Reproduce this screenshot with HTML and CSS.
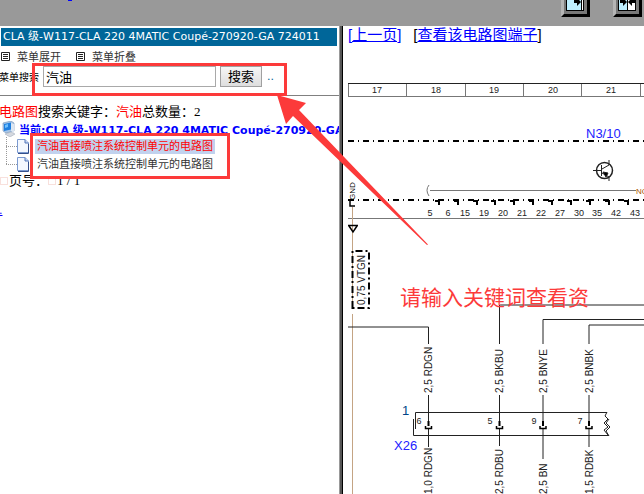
FILE: index.html
```
<!DOCTYPE html>
<html lang="zh-CN">
  <head>
    <meta charset="UTF-8" />
    <title>电路图</title>
    <meta name="viewport" content="width=device-width, initial-scale=1.0" />
    <link rel="stylesheet" href="styles.css">
  </head>
  <body>
    <header class="toolbar">
      <span class="toolbar-mark"></span>
      <div class="toolbar-buttons">
        <button type="button" class="frame-button" aria-label="单栏">
          <svg width="29" height="17" viewBox="0 0 29 17">
            <path d="M0 0H29V17H0z" fill="#000" />
            <path d="M0 0H4V13L0 17z" fill="#b5b5b5" />
            <path d="M3 0H26V14H3z" fill="#777" />
            <path d="M5 0H23V11H5z" fill="#000" />
            <path d="M6 0H20V10H6z" fill="#bfefff" />
            <path d="M21 0H22V10H21z" fill="#fff" />
            <path d="M13 0H18L20 2L16 6V3H13z" fill="#000" />
          </svg>
        </button>
        <button type="button" class="frame-button" aria-label="双栏">
          <svg width="29" height="17" viewBox="0 0 29 17">
            <path d="M0 0H29V17H0z" fill="#000" />
            <path d="M0 0H4V13L0 17z" fill="#b5b5b5" />
            <path d="M3 0H26V14H3z" fill="#777" />
            <path d="M5 0H23V11H5z" fill="#000" />
            <path d="M6 0H14V10H6z" fill="#bfefff" />
            <path d="M15 0H22V10H15z" fill="#fff" />
            <path d="M7 0H12L14 2L10 6V3H7zM22 0H17L15 2L19 6V3H22z" fill="#000" />
          </svg>
        </button>
      </div>
    </header>

    <main class="frames">
      <section class="menu">
        <div class="menu-title">CLA 级-W117-CLA 220 4MATIC Coupé-270920-GA 724011</div>

        <div class="menu-actions">
          <button type="button" class="menu-action">
            <svg width="9" height="9" viewBox="0 0 9 9"><path d="M.5.5h8v8h-8zM2 2.5h5M2 4.5h5M2 6.5h5" /></svg>
            菜单展开
          </button>
          <button type="button" class="menu-action">
            <svg width="9" height="9" viewBox="0 0 9 9"><path d="M.5.5h8v8h-8zM2 2.5h5M2 4.5h5M2 6.5h5" /></svg>
            菜单折叠
          </button>
        </div>

        <form class="search">
          <label for="keyword">菜单搜索</label>
          <input type="text" id="keyword" value="汽油" />
          <button type="button">搜索</button>
          <a href="#" class="search-more">..</a>
          <span class="mark mark-search"></span>
        </form>

        <p class="summary"><em>电路图</em>搜索关键字：<em>汽油</em>总数量：2</p>

        <div class="tree">
          <div class="tree-root">
            <svg width="14" height="16" viewBox="0 0 14 16">
              <path d="M1 2L9 0L12 2V10L4 12L1 10z" fill="#a9c7e8" stroke="#6f8fb5" stroke-width="0.6" />
              <path d="M2 3L9 1.500V8.500L2 10z" fill="#1f7fe0" />
              <path d="M3 4L6 3V6L3 7z" fill="#6fc0ff" />
              <path d="M9 2L12 3V12L9 10z" fill="#dce6f2" />
              <path d="M3 13L9 11L13 13L8 16z" fill="#d5d9e0" stroke="#98a2b3" stroke-width="0.5" />
            </svg>
            <a href="#">当前:CLA 级-W117-CLA 220 4MATIC Coupé-270920-GA 724011</a>
          </div>
          <ul class="tree-items">
            <li>
              <svg width="12" height="15" viewBox="0 0 12 15">
                <path d="M.5 .5H8L11.500 4V13.500H.5z" fill="#f4f8ff" stroke="#7c9ad0" />
                <path d="M8 .5V4H11.500" fill="#c5d7f5" stroke="#5577b8" />
                <path d="M1 14.500H11.500V5" fill="none" stroke="#34508c" />
              </svg>
              <a href="#" class="selected">汽油直接喷注系统控制单元的电路图</a>
            </li>
            <li>
              <svg width="12" height="15" viewBox="0 0 12 15">
                <path d="M.5 .5H8L11.500 4V13.500H.5z" fill="#f4f8ff" stroke="#7c9ad0" />
                <path d="M8 .5V4H11.500" fill="#c5d7f5" stroke="#5577b8" />
                <path d="M1 14.500H11.500V5" fill="none" stroke="#34508c" />
              </svg>
              <a href="#">汽油直接喷注系统控制单元的电路图</a>
            </li>
          </ul>
          <span class="mark mark-items"></span>
        </div>

        <p class="pager"><i></i>页号：<i></i>1 / 1</p>
        <a href="#" class="menu-end">.</a>
      </section>

      <div class="divider"></div>

      <section class="diagram">
        <nav class="diagram-links">
          <a href="#">[上一页]</a>
          <span>[<a href="#">查看该电路图端子</a>]</span>
        </nav>

        <svg class="wiring" width="296" height="444" viewBox="348 50 296 444">
          <!-- column ruler -->
          <path class="ruler" d="M348.500 84V96M406.500 84V96M465.500 84V96M523.500 84V96M581.500 84V96M640.500 84V96M348 96.500H644" />
          <path class="line" d="M348 83.500H644" />
          <g class="small">
            <text x="377" y="93">17</text>
            <text x="436" y="93">18</text>
            <text x="494" y="93">19</text>
            <text x="553" y="93">20</text>
            <text x="611" y="93">21</text>
          </g>

          <!-- control unit N3/10 -->
          <path class="dash" d="M348 141H644M348 200H644" />
          <text class="name" x="586" y="138">N3/10</text>
          <g class="thin">
            <circle cx="604.500" cy="170.500" r="8" stroke-width="1.500" />
            <path d="M593 170.500H601M601.500 165V176M602 169L609 165V160M602 173L609 177V181" />
            <path d="M603 172L608 173L606 177z" class="solid" />
          </g>
          <path class="grey" d="M430 190.500H636M429 185Q425 190 429 196" />
          <text class="label-orange" x="636" y="194">NC</text>
          <path class="pins" d="M435 201H439V205M454 201H458V205M473 201H477V205M491 201H495V205M510 201H514V205M529 201H533V205M548 201H552V205M567 201H571V205M586 201H590V205M605 201H609V205M624 201H628V205" />
          <g class="small">
            <text x="430" y="216">5</text>
            <text x="448" y="216">6</text>
            <text x="465" y="216">15</text>
            <text x="484" y="216">19</text>
            <text x="503" y="216">20</text>
            <text x="522" y="216">21</text>
            <text x="541" y="216">22</text>
            <text x="560" y="216">27</text>
            <text x="579" y="216">30</text>
            <text x="597" y="216">35</text>
            <text x="616" y="216">42</text>
            <text x="635" y="216">43</text>
          </g>
          <path class="grey" d="M348 218.500H644" />

          <!-- ground wire -->
          <path class="tan" d="M352.500 207V309M352.500 314V494" />
          <path class="joint" d="M352 200H350V206H355M348 225.500H358M349 226L353 232L357 226" />
          <text class="tiny" transform="translate(355 200) rotate(-90)">GND</text>
          <path class="dash-box" d="M352.500 308V251H369V308z" />
          <text class="wire" transform="translate(365 305) rotate(-90)">0,75 VTGN</text>

          <!-- wires to X26 -->
          <path class="line" d="M348 327H428.500V344M499.500 344V305H644M543 344V319.500H644M589 344V325H644" />
          <g class="wire">
            <text transform="translate(432 393) rotate(-90)">2,5 RDGN</text>
            <text transform="translate(503 393) rotate(-90)">2,5 BKBU</text>
            <text transform="translate(547 393) rotate(-90)">2,5 BNYE</text>
            <text transform="translate(593 393) rotate(-90)">2,5 BNBK</text>
            <text transform="translate(432 494) rotate(-90)">1,0 RDGN</text>
            <text transform="translate(503 494) rotate(-90)">2,5 RDBU</text>
            <text transform="translate(547 494) rotate(-90)">2,5 BN</text>
            <text transform="translate(593 494) rotate(-90)">1,5 RDBK</text>
          </g>
          <path class="line" d="M428.500 395V424M499.500 395V424M543 395V424M589 395V424M428.500 428V447M499.500 428V446M543 428V459M589 428V447" />
          <path class="contact" d="M428.500 421V426M499.500 421V426M543 421V426M589 421V426" />
          <path class="socket" d="M425.500 426V428.500H431.500V426M496.500 426V428.500H502.500V426M540 426V428.500H546V426M586 426V428.500H592V426" />
          <path class="line" d="M415.500 429V412.500H607M413.500 419V435.500H609" />
          <path class="thin" d="M607 412L605 416L608 419L604 423L608 427L604 430L608 435M609 419L606 423L610 427L606 431L609 436" />
          <g class="small">
            <text x="419" y="424">6</text>
            <text x="490" y="424">5</text>
            <text x="534" y="424">9</text>
            <text x="580" y="424">7</text>
          </g>
          <text class="name name-dark" x="402" y="415">1</text>
          <text class="name" x="394" y="450">X26</text>

          <text class="hint" x="400" y="305">请输入关键词查看资</text>
        </svg>
      </section>

      <svg class="arrow" width="152" height="152" viewBox="277 95 152 152">
        <path d="M277 95L306 103L299 110L428 244.500L427 245L293 116L286 124z" />
      </svg>
    </main>
  </body>
</html>
```
FILE: styles.css
```
* {
  box-sizing: border-box;
}

body {
  margin: 0;
  height: 100vh;
  display: flex;
  flex-direction: column;
  overflow: hidden;
  background: #fff;
  color: #000;
  font-family: "DejaVu Sans", "Noto Sans CJK SC", sans-serif;
  font-size: 11px;
}

a {
  color: #00f;
}

button {
  font-family: inherit;
  cursor: pointer;
}

.toolbar {
  flex: none;
  height: 26px;
  display: flex;
  justify-content: space-between;
  align-items: flex-start;
  padding: 0 2px 0 68px;
  background: #999;
}

.toolbar-mark {
  width: 4px;
  height: 1px;
  background: #00f;
}

.toolbar-buttons {
  display: flex;
  gap: 23px;
}

.frame-button {
  padding: 0;
  border: none;
  background: none;
}

.frame-button svg {
  display: block;
}

.frames {
  position: relative;
  flex: 1;
  min-height: 0;
  display: grid;
  grid-template-columns: minmax(0, 339fr) 4px minmax(0, 301fr);
}

/* left frame */
.menu {
  overflow: hidden;
  padding-top: 2px;
}

.menu-title {
  margin: 0 2px 0 1px;
  padding: 0 2px;
  height: 18px;
  line-height: 18px;
  background: #069;
  color: #fff;
  white-space: nowrap;
}

.menu-actions {
  display: flex;
  gap: 15px;
  height: 20px;
  padding-left: 1px;
}

.menu-action {
  display: flex;
  align-items: center;
  gap: 7px;
  padding: 0;
  border: none;
  background: none;
  color: #333;
  font-size: 11px;
}

.menu-action svg {
  fill: none;
  stroke: #222;
}

.search {
  position: relative;
  display: flex;
  align-items: center;
  height: 30px;
  padding-bottom: 8px;
  border-bottom: 1px solid #808080;
}

.search label {
  width: 43px;
  margin-left: -1px;
  margin-right: 1px;
  font-size: 10px;
  white-space: nowrap;
}

.search input {
  flex: 0 1 173px;
  min-width: 0;
  height: 21px;
  padding: 0 2px;
  border: 1px solid #a9a9a9;
  font-family: inherit;
  font-size: 13px;
}

.search button {
  width: 42px;
  height: 21px;
  margin-left: 4px;
  padding: 0;
  border: 1px solid #a0a0a0;
  background: linear-gradient(#f6f6f6, #dedede);
  font-size: 13px;
  line-height: 17px;
}

.search-more {
  margin-left: 5px;
  color: #069;
  text-decoration: none;
}

.mark {
  position: absolute;
  border: 3px solid #fc3a3a;
  pointer-events: none;
}

.mark-search {
  left: 32px;
  top: -3px;
  width: 255px;
  height: 33px;
}

.summary {
  margin: 7px 0 0 -1px;
  height: 17px;
  font-family: "Liberation Serif", "Noto Sans CJK SC", serif;
  font-size: 13px;
  line-height: 17px;
  white-space: nowrap;
}

.summary em {
  color: #f00;
  font-style: normal;
}

.tree {
  position: relative;
}

.tree-root {
  display: flex;
  align-items: center;
  gap: 3px;
  height: 17px;
  padding-left: 2px;
  font-weight: bold;
  white-space: nowrap;
}

.tree-root svg {
  flex: none;
}

.tree-root a {
  text-decoration: none;
}

.tree-items {
  margin: 0;
  padding: 0 0 0 6px;
  list-style: none;
}

.tree-items li {
  display: flex;
  align-items: center;
  height: 18px;
}

/* dotted branch in front of each page icon */
.tree-items li::before {
  content: "";
  width: 11px;
  height: 18px;
  background:
    repeating-linear-gradient(#999 0 1px, transparent 1px 2px) 0 0 / 1px 100% no-repeat,
    repeating-linear-gradient(90deg, #999 0 1px, transparent 1px 2px) 0 9px / 100% 1px no-repeat;
}

.tree-items li:last-child::before {
  background-size: 1px 9px, 100% 1px;
}

.tree-items svg {
  flex: none;
  margin-right: 6px;
}

.tree-items a {
  height: 15px;
  padding: 0 2px;
  color: #333;
  line-height: 15px;
  text-decoration: none;
  white-space: nowrap;
}

.tree-items .selected {
  background: #c1d2ee;
  color: #f00;
}

.mark-items {
  left: 30px;
  top: 13px;
  width: 200px;
  height: 46px;
}

.pager {
  display: flex;
  align-items: center;
  margin: 0;
  height: 16px;
  font-family: "Liberation Serif", "Noto Sans CJK SC", serif;
  font-size: 13px;
  line-height: 16px;
  white-space: pre;
}

.pager i {
  width: 8px;
  height: 8px;
  margin-right: 1px;
  border: 1px solid #f8e0dc;
}

.menu-end {
  display: block;
  width: 3px;
  margin: 15px 0 0 -1px;
}

.divider {
  border-left: 1px solid #999;
  border-right: 1px solid #000;
  background: #555;
}

/* right frame */
.diagram {
  overflow: hidden;
  padding-left: 5px;
}

.diagram-links {
  display: flex;
  gap: 12px;
  height: 24px;
  font-family: "Liberation Sans", "Noto Sans CJK SC", sans-serif;
  font-size: 15px;
  line-height: 17px;
  white-space: nowrap;
}

.wiring {
  display: block;
  font-family: "Liberation Sans", "Noto Sans CJK SC", sans-serif;
}

.wiring path,
.wiring circle {
  fill: none;
  stroke: #222;
}

.wiring .solid {
  fill: #000;
}

.wiring .ruler,
.wiring .grey {
  stroke: #777;
}

.wiring .dash {
  stroke: #000;
  stroke-width: 2;
  stroke-dasharray: 6 4 1 4;
}

.wiring .dash-box {
  stroke: #000;
  stroke-width: 2;
  stroke-dasharray: 7 3 2 3;
}

.wiring .pins {
  stroke: #000;
  stroke-width: 2;
}

.wiring .joint,
.wiring .socket {
  stroke: #000;
  stroke-width: 1.5;
}

.wiring .contact {
  stroke: #000;
  stroke-width: 2;
}

.wiring .tan {
  stroke: #c4a484;
}

.small {
  font-size: 9px;
  text-anchor: middle;
  fill: #222;
}

.tiny {
  font-size: 8px;
}

.wire {
  font-size: 10px;
  fill: #222;
}

.name {
  font-size: 13px;
  fill: #22f;
}

.name-dark {
  fill: #048;
}

.label-orange {
  font-size: 8px;
  fill: #a50;
}

.hint {
  font-size: 21px;
  fill: #fc3a3a;
}

.arrow {
  position: absolute;
  left: 277px;
  top: 69px;
  fill: #fc3a3a;
  pointer-events: none;
}
```
